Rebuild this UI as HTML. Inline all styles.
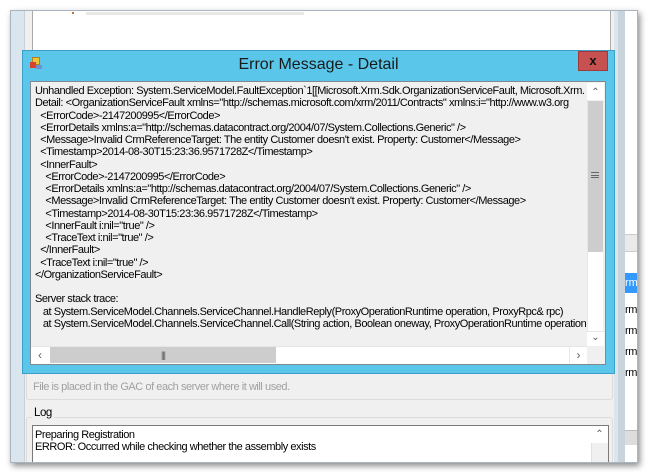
<!DOCTYPE html>
<html><head><meta charset="utf-8"><style>
*{margin:0;padding:0;box-sizing:border-box}
body{width:650px;height:472px;background:#fff;position:relative;overflow:hidden;font-family:"Liberation Sans",sans-serif}
.a{position:absolute}
.txt{font-size:11px;letter-spacing:-0.45px;white-space:pre;line-height:12.25px;color:#000}
.sb{background:#f0f0f0}
</style></head><body>
<div class="a" style="left:10px;top:10px;width:628px;height:453px;background:#dbe5ee;border:1px solid #a8b4bf;box-shadow:2px 3px 6px rgba(0,0,0,.45)"></div>
<div class="a" style="left:24px;top:11px;width:590px;height:451px;background:#f0f0f0;border-left:1px solid #c8d0d8;overflow:hidden">
  <div class="a" style="left:1px;top:319px;width:587px;height:70px;border:1px solid #dcdcdc;border-radius:3px"></div>
  <div class="a txt" style="left:8px;top:370px;color:#a0a0a0">File is placed in the GAC of each server where it will used.</div>
  <div class="a" style="left:1px;top:406px;width:587px;height:60px;border:1px solid #dcdcdc;border-radius:3px"></div>
  <div class="a txt" style="left:7px;top:395px;background:#f0f0f0;padding:0 2px;line-height:14px;font-size:11.5px">Log</div>
  <div class="a" style="left:7px;top:414px;width:577px;height:50px;background:#fff;border:1px solid #7a7a7a"></div>
  <div class="a txt" style="left:10px;top:418px">Preparing Registration
ERROR: Occurred while checking whether the assembly exists</div>
  <div class="a sb" style="left:566px;top:415px;width:17px;height:40px;border-left:1px solid #e0e0e0"></div>
  <div class="a" style="left:566px;top:415px;width:17px;height:17px;background:#fff;color:#606060;font-size:10px;text-align:center;line-height:17px">&#8963;</div>
</div>
<div class="a" style="left:32px;top:11px;width:579px;height:40px;background:#fff;border-left:1px solid #aaa;border-right:1px solid #aaa"></div>
<div class="a" style="left:72px;top:12px;width:2px;height:2px;background:#c07030"></div>
<div class="a" style="left:86px;top:12px;width:218px;height:3px;background:#e8e8e8"></div>
<div class="a" style="left:618px;top:11px;width:7px;height:451px;background:#c9d3dc"></div>
<div class="a" style="left:625px;top:11px;width:12px;height:451px;background:#fff"></div>
<div class="a" style="left:625px;top:234px;width:12px;height:18px;background:#eaeaea;border-top:1px solid #ccc;border-bottom:1px solid #ccc"></div>
<div class="a" style="left:625px;top:273px;width:12px;height:20px;background:#3399ff;color:#fff;font-size:11px;line-height:20px;overflow:hidden">rm</div>
<div class="a txt" style="left:625px;top:300px;line-height:21px;width:12px;overflow:hidden">rm
rm
rm
rm</div>
<div class="a" style="left:625px;top:430px;width:12px;height:15px;background:#ddd;border-top:1px solid #bbb"></div>
<!-- dialog -->
<div class="a" style="left:22px;top:50px;width:593px;height:324px;background:#5ac7ea;border:1px solid #3aa0c8"></div>
<div class="a" style="left:30px;top:55px;width:16px;height:16px">
<div class="a" style="left:2px;top:2px;width:8px;height:8px;background:#f2c23a;border:1px solid #b08020"></div>
<div class="a" style="left:0;top:7px;width:6px;height:6px;background:#d84030"></div>
<div class="a" style="left:6px;top:10px;width:6px;height:4px;background:#7090d0"></div>
</div>
<div class="a" style="left:22px;top:54px;width:593px;text-align:center;font-size:16px;color:#1a1a1a;line-height:22px">Error Message - Detail</div>
<div class="a" style="left:578px;top:51px;width:30px;height:20px;background:#c75050;border:1px solid #a03a3a;color:#111;font-weight:bold;font-size:13px;text-align:center;line-height:18px">x</div>
<div class="a" style="left:30px;top:81px;width:576px;height:284px;background:#f0f0f0;border:1px solid #828790"></div>
<div class="a" style="left:31px;top:82px;width:555px;height:265px;overflow:hidden">
<div class="txt" style="padding:3px 0 0 4px">Unhandled Exception: System.ServiceModel.FaultException`1[[Microsoft.Xrm.Sdk.OrganizationServiceFault, Microsoft.Xrm.
Detail: &lt;OrganizationServiceFault xmlns="http://schemas.microsoft.com/xrm/2011/Contracts" xmlns:i="http://www.w3.org
  &lt;ErrorCode&gt;-2147200995&lt;/ErrorCode&gt;
  &lt;ErrorDetails xmlns:a="http://schemas.datacontract.org/2004/07/System.Collections.Generic" /&gt;
  &lt;Message&gt;Invalid CrmReferenceTarget: The entity Customer doesn't exist. Property: Customer&lt;/Message&gt;
  &lt;Timestamp&gt;2014-08-30T15:23:36.9571728Z&lt;/Timestamp&gt;
  &lt;InnerFault&gt;
    &lt;ErrorCode&gt;-2147200995&lt;/ErrorCode&gt;
    &lt;ErrorDetails xmlns:a="http://schemas.datacontract.org/2004/07/System.Collections.Generic" /&gt;
    &lt;Message&gt;Invalid CrmReferenceTarget: The entity Customer doesn't exist. Property: Customer&lt;/Message&gt;
    &lt;Timestamp&gt;2014-08-30T15:23:36.9571728Z&lt;/Timestamp&gt;
    &lt;InnerFault i:nil="true" /&gt;
    &lt;TraceText i:nil="true" /&gt;
  &lt;/InnerFault&gt;
  &lt;TraceText i:nil="true" /&gt;
&lt;/OrganizationServiceFault&gt;

Server stack trace:
   at System.ServiceModel.Channels.ServiceChannel.HandleReply(ProxyOperationRuntime operation, ProxyRpc&amp; rpc)
   at System.ServiceModel.Channels.ServiceChannel.Call(String action, Boolean oneway, ProxyOperationRuntime operation</div>
</div>
<div class="a sb" style="left:587px;top:82px;width:17px;height:264px;border-left:1px solid #e6e6e6"></div>
<div class="a" style="left:587px;top:83px;width:17px;height:17px;background:#fff;color:#606060;font-size:10px;text-align:center;line-height:19px">&#8963;</div>
<div class="a" style="left:588px;top:101px;width:15px;height:151px;background:#cdcdcd"></div>
<div class="a" style="left:591px;top:172px;width:8px;height:6px;border-top:1px solid #666;border-bottom:1px solid #666"><div style="margin-top:2px;height:1px;background:#666"></div></div>
<div class="a" style="left:588px;top:252px;width:15px;height:80px;background:#fff"></div>
<div class="a" style="left:587px;top:331px;width:17px;height:15px;background:#fff;color:#606060;font-size:10px;text-align:center;line-height:12px;border-top:1px solid #e6e6e6">&#8964;</div>
<div class="a" style="left:31px;top:346px;width:556px;height:18px;background:#fff;border-top:1px solid #e6e6e6"></div>
<div class="a" style="left:31px;top:347px;width:18px;height:16px;color:#606060;font-size:12px;text-align:center;line-height:16px">&lsaquo;</div>
<div class="a" style="left:50px;top:347px;width:226px;height:16px;background:#cdcdcd;color:#555;font-size:9px;text-align:center;line-height:16px;letter-spacing:-1px">|||</div>
<div class="a" style="left:569px;top:347px;width:18px;height:16px;color:#606060;font-size:12px;text-align:center;line-height:16px;border-left:1px solid #e6e6e6">&rsaquo;</div>
<div class="a sb" style="left:587px;top:346px;width:18px;height:18px"></div>
</body></html>
